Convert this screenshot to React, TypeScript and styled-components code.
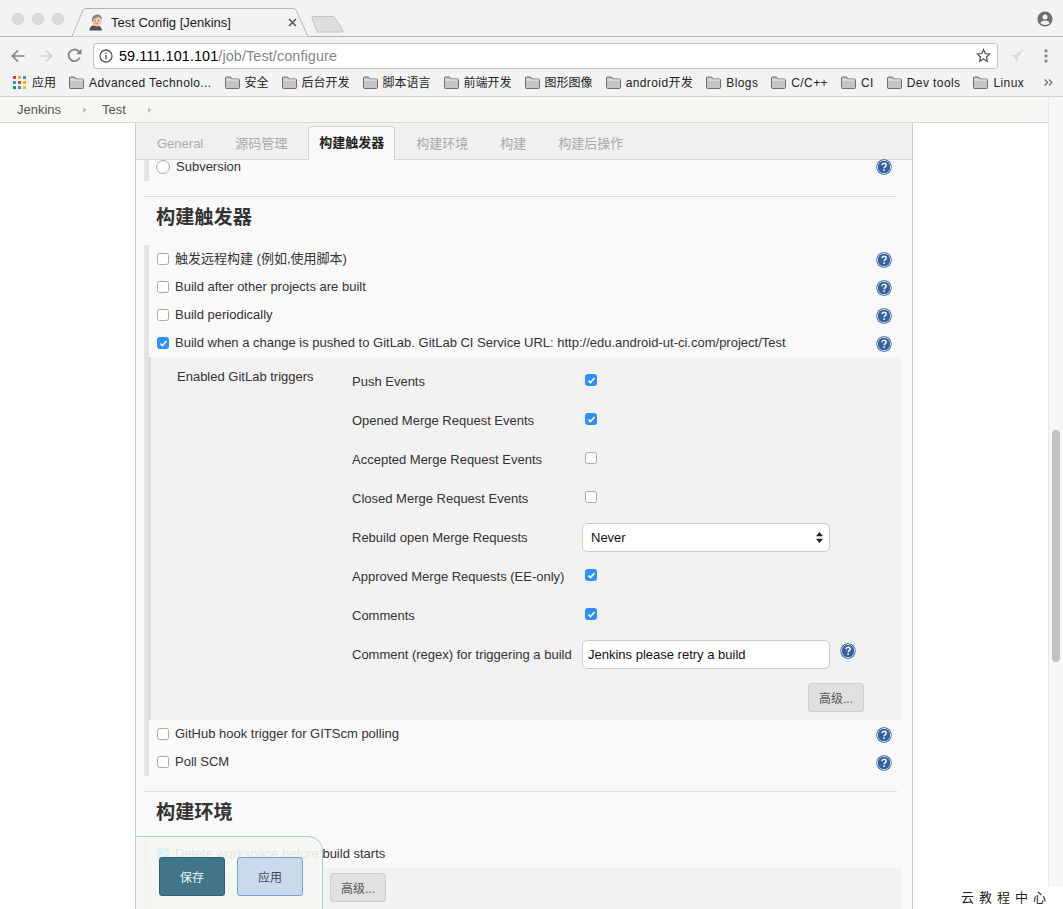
import { ReactNode } from "react";
import styled, { createGlobalStyle } from "styled-components";

const FONT = `"Liberation Sans", "Noto Sans CJK SC", sans-serif`;

const GlobalStyle = createGlobalStyle`
  html, body {
    margin: 0;
    height: 100%;
    overflow: hidden;
    background: #fff;
    font-family: ${FONT};
  }
  * { box-sizing: border-box; }
`;

const Screen = styled.div`
  position: relative;
  width: 1063px;
  height: 909px;
  overflow: hidden;
  display: flex;
  flex-direction: column;
`;

/* browser chrome */
const TitleBar = styled.div`
  height: 37px;
  flex: none;
  display: flex;
  background: #f3f3f3;
  border-bottom: 1px solid #b4b4b4;
  padding: 0 10px 0 12px;
`;

const Lights = styled.div`
  display: flex;
  gap: 8px;
  padding-top: 13px;
`;

const Light = styled.span`
  width: 12px;
  height: 12px;
  border-radius: 50%;
  background: #dcdcdc;
  border: 1px solid #d2d2d2;
`;

const Tab = styled.div`
  position: relative;
  width: 240px;
  height: 37px;
  margin-left: 7px;
  display: flex;
  align-items: center;
  padding: 8px 0 0 18px;
  font-size: 13px;
  color: #222;
`;

const TabShape = styled.svg`
  position: absolute;
  left: 0;
  top: 0;
`;

const TabTitle = styled.span`
  position: relative;
  margin-left: 6px;
  width: 177px;
`;

const TabClose = styled.svg`
  position: relative;
`;

const NewTab = styled.svg`
  margin: 16px 0 0 0;
`;

const TitleEnd = styled.div`
  margin-left: auto;
  padding-top: 11px;
`;

const ToolBar = styled.div`
  height: 33px;
  flex: none;
  display: flex;
  align-items: center;
  background: #f3f3f3;
  padding: 4px 0 0 11px;
`;

const NavIcons = styled.div`
  display: flex;
  align-items: center;
  gap: 14px;
  width: 82px;
`;

const Omnibox = styled.div`
  width: 905px;
  height: 26px;
  background: #fff;
  border: 1px solid #c2c2c2;
  border-radius: 3px;
  display: flex;
  align-items: center;
  padding: 0 6px 0 5px;
  font-size: 14.4px;
  color: #000;
  gap: 6px;
`;

const UrlMuted = styled.span`
  color: #80868b;
`;

const UrlText = styled.span`
  flex: 1;
  letter-spacing: 0.1px;
`;

const ToolEnd = styled.div`
  display: flex;
  align-items: center;
  margin-left: 11px;
  gap: 19px;
`;

const BookmarkBar = styled.div`
  height: 27px;
  flex: none;
  display: flex;
  align-items: center;
  background: #f3f3f3;
  border-bottom: 1px solid #d4d4d4;
  padding: 0 10px 1px 13px;
  font-size: 12px;
  color: #222;
  gap: 13px;
`;

const Bookmark = styled.span<{ $latin?: boolean }>`
  display: flex;
  align-items: center;
  gap: 5px;
  line-height: 14px;
  white-space: nowrap;
  letter-spacing: ${(p) => (p.$latin ? "0.4px" : "0")};
`;

const AppsBookmark = styled(Bookmark)`
  gap: 6px;
`;

const More = styled.svg`
  margin-left: auto;
`;

/* jenkins page */
const Breadcrumbs = styled.div`
  height: 26px;
  flex: none;
  display: flex;
  align-items: center;
  background: #f6f7f2;
  border-bottom: 1px solid #d8dcd0;
  padding: 0 15px 0 17px;
  font-size: 13px;
  color: #555;
`;

const Crumb = styled.span`
  margin-right: 22px;
`;

const CrumbArrow = styled.span`
  width: 0;
  height: 0;
  margin-right: 15px;
  border-left: 4px solid #c4c4c4;
  border-top: 3.5px solid transparent;
  border-bottom: 3.5px solid transparent;
`;

const Body = styled.div`
  flex: 1;
  min-height: 0;
  display: flex;
  padding-left: 135px;
`;

const Panel = styled.div`
  width: 778px;
  background: #f9f9f9;
  border-left: 1px solid #cfcfcf;
  border-right: 1px solid #cfcfcf;
`;

const TabBar = styled.div`
  height: 37px;
  display: flex;
  align-items: flex-end;
  gap: 10px;
  padding-left: 10px;
  background: #f0f0f0;
  border-bottom: 1px solid #d4d4d4;
`;

const PageTab = styled.div<{ $active?: boolean }>`
  height: ${(p) => (p.$active ? "34px" : "32px")};
  margin-bottom: -1px;
  padding: 0 ${(p) => (p.$active ? "10px" : "11px")};
  display: flex;
  align-items: center;
  padding-bottom: ${(p) => (p.$active ? "2px" : "1px")};
  font-size: 13px;
  line-height: 14px;
  font-weight: ${(p) => (p.$active ? 700 : 400)};
  color: ${(p) => (p.$active ? "#222" : "#aaa")};
  background: ${(p) => (p.$active ? "#f9f9f9" : "transparent")};
  border: ${(p) => (p.$active ? "1px solid #d4d4d4" : "none")};
  border-bottom: none;
  border-radius: 4px 4px 0 0;
`;

const Form = styled.div`
  padding: 0 15px 0 8px;
`;

const BarGroup = styled.div`
  border-left: 5px solid #e4e4e4;
`;

const Row = styled.div`
  height: 28px;
  display: flex;
  align-items: center;
  padding: 0 5px 0 8px;
  font-size: 13px;
  color: #333;
`;

const TopRow = styled(Row)`
  height: 21px;
  padding: 0 5px 7px 7px;
`;

const Divider = styled.hr`
  margin: 15px 0 0;
  border: none;
  border-top: 1px solid #dcdcdc;
`;

const Heading = styled.h2`
  margin: 0;
  height: 48px;
  padding: 9px 0 0 12px;
  font-size: 19.2px;
  line-height: 24px;
  font-weight: 700;
  color: #333;
`;

const Label = styled.span`
  flex: 1;
  margin-left: 6px;
  line-height: 14px;
`;

const Radio = styled.span`
  width: 14px;
  height: 14px;
  border-radius: 50%;
  background: #fff;
  border: 1px solid #aaa;
`;

const Box = styled.span<{ $checked?: boolean }>`
  width: 12px;
  height: 12px;
  flex: none;
  border-radius: 2.5px;
  display: flex;
  align-items: center;
  justify-content: center;
  background: ${(p) => (p.$checked ? "#2f8ffb" : "#fff")};
  border: 1px solid ${(p) => (p.$checked ? "#2f8ffb" : "#a9a9a9")};
`;

const RowHelp = styled.span`
  display: flex;
  margin-top: 2px;
`;

const Nested = styled.div`
  margin-left: -2px;
  margin-right: -5px;
  background: #f2f2f2;
  border-left: 4px solid #dcdcdc;
  display: flex;
  height: 363px;
  padding: 5px 38px 8px 26px;
`;

const NestedTitle = styled.div`
  width: 175px;
  font-size: 13px;
  color: #333;
  line-height: 30px;
`;

const Triggers = styled.div`
  flex: 1;
`;

const TriggerRow = styled.div`
  height: 39px;
  display: flex;
  align-items: center;
  font-size: 13px;
  color: #333;
`;

const TriggerLabel = styled.span`
  width: 230px;
  flex: none;
  white-space: nowrap;
`;

const TriggerCheck = styled.span`
  padding: 0 0 3px 3px;
`;

const SelectBox = styled.div`
  width: 248px;
  height: 29px;
  background: #fff;
  border: 1px solid #ccc;
  border-radius: 5px;
  display: flex;
  align-items: center;
  justify-content: space-between;
  padding: 0 6px 0 8px;
  font-size: 13px;
  color: #111;
`;

const TextBox = styled(SelectBox)`
  padding-left: 5px;
  justify-content: flex-start;
`;

const HelpSlot = styled.span`
  margin: -7px 0 0 10px;
  display: flex;
`;

const ButtonRow = styled.div`
  display: flex;
  justify-content: flex-end;
  padding-top: 9px;
`;

const GreyButton = styled.button`
  width: 56px;
  height: 29px;
  padding: 0;
  border: 1px solid #cdcdcd;
  border-radius: 3px;
  background: #e0e0e0;
  color: #555;
  font-family: ${FONT};
  font-size: 12px;
`;

const LowerPanel = styled.div`
  margin-left: -2px;
  margin-right: -5px;
  height: 41px;
  background: #f2f2f2;
  border-left: 4px solid #dcdcdc;
  padding: 5px 0 0 179px;
`;

const SaveBar = styled.div`
  position: absolute;
  left: 136px;
  bottom: 0;
  width: 187px;
  height: 73px;
  display: flex;
  gap: 12px;
  padding: 20px 0 0 23px;
  background: rgba(245, 248, 242, 0.9);
  border: 1px solid #a5d4bb;
  border-left: none;
  border-bottom: none;
  border-radius: 0 15px 0 0;
`;

const ActionButton = styled.button<{ $primary?: boolean }>`
  width: 66px;
  height: 39px;
  padding: 0;
  border-radius: 3px;
  font-family: ${FONT};
  font-size: 12px;
  color: ${(p) => (p.$primary ? "#f2f5f5" : "#3c4a55")};
  background: ${(p) => (p.$primary ? "#40768a" : "#c9daec")};
  border: 1px solid ${(p) => (p.$primary ? "#2f5f72" : "#6fa5d8")};
`;

const ScrollTrack = styled.div`
  position: absolute;
  right: 0;
  top: 97px;
  bottom: 0;
  width: 15px;
  background: #f7f7f7;
  border-left: 1px solid #e9e9e9;
`;

const ScrollThumb = styled.div`
  position: absolute;
  left: 3px;
  top: 333px;
  width: 8px;
  height: 232px;
  border-radius: 4px;
  background: #c2c2c2;
`;

const Watermark = styled.div`
  position: absolute;
  right: 0;
  bottom: 0;
  width: 118px;
  height: 22px;
  background: #fff;
  padding-left: 16px;
  font-size: 13px;
  line-height: 22px;
  letter-spacing: 5px;
  color: #222;
  white-space: nowrap;
`;

const AppsGrid = styled.span`
  display: grid;
  grid-template-columns: repeat(3, 3px);
  grid-auto-rows: 3px;
  gap: 2px;
`;

const AppsDot = styled.i<{ $color: string }>`
  background: ${(p) => p.$color};
`;

const FaviconSvg = styled.svg`
  position: relative;
`;

const Folder = () => (
  <svg width="15" height="13" viewBox="0 0 15 13">
    <path d="M.5 11.5V2a1 1 0 0 1 1-1h4l1.5 2h6.5a1 1 0 0 1 1 1v7.5a1 1 0 0 1-1 1h-12a1 1 0 0 1-1-1z" fill="#c4c4c4" stroke="#6e6e6e" />
    <path d="M1 4h13" stroke="#f2f2f2" />
  </svg>
);

const Help = () => (
  <svg width="16" height="16" viewBox="0 0 17 17">
    <circle cx="8.5" cy="8.5" r="8.2" fill="#2f5a9c" />
    <circle cx="8.5" cy="8.5" r="6.9" fill="none" stroke="#e8eef6" strokeWidth="1" />
    <circle cx="8.5" cy="8.5" r="6.3" fill="#34619f" />
    <path d="M6.3 6.6c.2-1.4 1.1-2 2.3-2 1.3 0 2.2.8 2.2 1.9 0 1-.6 1.4-1.3 1.9-.5.4-.7.7-.7 1.4" fill="none" stroke="#fff" strokeWidth="1.6" />
    <rect x="7.8" y="11" width="1.6" height="1.7" fill="#fff" />
  </svg>
);

const CheckBox = ({ checked }: { checked?: boolean }) => (
  <Box $checked={checked}>
    {checked && (
      <svg width="9" height="9" viewBox="0 0 9 9">
        <path d="M1.5 4.6l2 2 4-4.6" fill="none" stroke="#fff" strokeWidth="1.6" />
      </svg>
    )}
  </Box>
);

const OptionRow = ({ label, checked }: { label: string; checked?: boolean }) => (
  <Row>
    <CheckBox checked={checked} />
    <Label>{label}</Label>
    <RowHelp>
      <Help />
    </RowHelp>
  </Row>
);

const Trigger = ({ label, children }: { label: string; children: ReactNode }) => (
  <TriggerRow>
    <TriggerLabel>{label}</TriggerLabel>
    {children}
  </TriggerRow>
);

const JenkinsFavicon = () => (
  <FaviconSvg width="16" height="17" viewBox="0 0 16 17">
    <path d="M.5 16.500c0-3 1.500-4.500 3.500-5h5c2 .5 3.500 2 4 5z" fill="#45505e" />
    <path d="M5.500 12l1.800 1.300L9 12l.8 2.300-2.500.4-2.500-.4z" fill="#a8322c" />
    <ellipse cx="8" cy="7" rx="4.800" ry="5.400" fill="#efc9ab" />
    <path d="M3 7C2.500 3 5 .6 8.500.6c2.700 0 4.500 2 4.300 5-1.300-.8-2.300-2-2.800-3C8.500 4 5.500 4 4.500 5.500L4 8z" fill="#8d8781" />
    <path d="M6 9.800c1-.5 2.200-.5 3.200 0" fill="none" stroke="#a9705a" strokeWidth=".8" />
    <circle cx="6.300" cy="6.800" r=".6" fill="#4a3a30" />
    <circle cx="9.500" cy="6.800" r=".6" fill="#4a3a30" />
  </FaviconSvg>
);

const APP_COLORS = ["#e34133", "#f4b400", "#4285f4", "#4285f4", "#e34133", "#f4b400", "#0f9d58", "#4285f4", "#f4b400"];
const BOOKMARKS = ["Advanced Technolo...", "安全", "后台开发", "脚本语言", "前端开发", "图形图像", "android开发", "Blogs", "C/C++", "CI", "Dev tools", "Linux"];
const TABS = ["General", "源码管理", "构建触发器", "构建环境", "构建", "构建后操作"];

const App = () => (
  <Screen>
    <GlobalStyle />
    <TitleBar>
      <Lights>
        <Light />
        <Light />
        <Light />
      </Lights>
      <Tab>
        <TabShape width="240" height="37" viewBox="0 0 240 37">
          <path d="M0 36.500h1L12 10q.8-1.500 2.500-1.500h208q1.700 0 2.500 1.500l12 26.500h3" fill="#f3f3f3" stroke="#b4b4b4" />
        </TabShape>
        <JenkinsFavicon />
        <TabTitle>Test Config [Jenkins]</TabTitle>
        <TabClose width="9" height="9" viewBox="0 0 9 9">
          <path d="M1 1l7 7M8 1l-7 7" stroke="#555" strokeWidth="1.500" />
        </TabClose>
      </Tab>
      <NewTab width="33" height="17" viewBox="0 0 33 17">
        <path d="M1 2q-.4-1.500 1-1.500h20q1 0 1.500 1L32 14q.8 2-1 2H7q-1 0-1.500-1z" fill="#dedede" stroke="#c4c4c4" />
      </NewTab>
      <TitleEnd>
        <svg width="16" height="16" viewBox="0 0 16 16">
          <circle cx="8" cy="8" r="7.600" fill="#6f6f6f" />
          <circle cx="8" cy="6" r="2.500" fill="#f3f3f3" />
          <path d="M3.300 12c1-2 2.800-2.600 4.700-2.600s3.700.6 4.700 2.600c-1.200 1.300-2.900 2-4.700 2s-3.500-.7-4.700-2z" fill="#f3f3f3" />
        </svg>
      </TitleEnd>
    </TitleBar>
    <ToolBar>
      <NavIcons>
        <svg width="14" height="14" viewBox="0 0 15 14">
          <path d="M14.500 7H2M7.500 1L1.500 7l6 6" fill="none" stroke="#858585" strokeWidth="1.800" />
        </svg>
        <svg width="14" height="14" viewBox="0 0 15 14">
          <path d="M.5 7H13M7.500 1l6 6-6 6" fill="none" stroke="#d4d4d4" strokeWidth="1.800" />
        </svg>
        <svg width="15" height="15" viewBox="0 0 15 15">
          <path d="M12.800 9.500A5.800 5.800 0 1 1 11.500 3.200L13.500 5" fill="none" stroke="#858585" strokeWidth="1.800" />
          <path d="M14.500 .8v5.400H9z" fill="#858585" />
        </svg>
      </NavIcons>
      <Omnibox>
        <svg width="14" height="14" viewBox="0 0 14 14">
          <circle cx="7" cy="7" r="6" fill="none" stroke="#555" strokeWidth="1.300" />
          <rect x="6.300" y="6" width="1.400" height="4.500" fill="#555" />
          <rect x="6.300" y="3.500" width="1.400" height="1.500" fill="#555" />
        </svg>
        <UrlText>
          59.111.101.101<UrlMuted>/job/Test/configure</UrlMuted>
        </UrlText>
        <svg width="15" height="15" viewBox="0 0 24 24">
          <path d="M12 2.500l2.900 6.300 6.800.8-5 4.700 1.300 6.800-6-3.400-6 3.400 1.300-6.800-5-4.700 6.800-.8z" fill="none" stroke="#555" strokeWidth="2" />
        </svg>
      </Omnibox>
      <ToolEnd>
        <svg width="16" height="16" viewBox="0 0 16 16">
          <path d="M15 1.500c-2 .5-4 1.500-5.500 3L7.500 3l.5 3.500L1 7.500l4.500 1.500 2 5.500 1-1.500.5-4.500 2-1.500 1.500-3z" fill="#dadada" />
        </svg>
        <svg width="4" height="14" viewBox="0 0 4 14">
          <rect x=".5" y=".5" width="3" height="3" rx="1" fill="#8a8a8a" />
          <rect x=".5" y="5.500" width="3" height="3" rx="1" fill="#8a8a8a" />
          <rect x=".5" y="10.500" width="3" height="3" rx="1" fill="#8a8a8a" />
        </svg>
      </ToolEnd>
    </ToolBar>
    <BookmarkBar>
      <AppsBookmark>
        <AppsGrid>
          {APP_COLORS.map((color, i) => (
            <AppsDot key={i} $color={color} />
          ))}
        </AppsGrid>
        应用
      </AppsBookmark>
      {BOOKMARKS.map((name) => (
        <Bookmark key={name} $latin={/[a-z]/i.test(name)}>
          <Folder />
          {name}
        </Bookmark>
      ))}
      <More width="9" height="7" viewBox="0 0 9 7">
        <path d="M.7.5L3.500 3.500.7 6.500M5 .5l2.800 3L5 6.500" fill="none" stroke="#777" strokeWidth="1.400" />
      </More>
    </BookmarkBar>
    <Breadcrumbs>
      <Crumb>Jenkins</Crumb>
      <CrumbArrow />
      <Crumb>Test</Crumb>
      <CrumbArrow />
    </Breadcrumbs>
    <Body>
      <Panel>
        <TabBar>
          {TABS.map((name, i) => (
            <PageTab key={name} $active={i === 2}>
              {name}
            </PageTab>
          ))}
        </TabBar>
        <Form>
          <BarGroup>
            <TopRow>
              <Radio />
              <Label>Subversion</Label>
              <Help />
            </TopRow>
          </BarGroup>
          <Divider />
          <Heading>构建触发器</Heading>
          <BarGroup>
            <OptionRow label="触发远程构建 (例如,使用脚本)" />
            <OptionRow label="Build after other projects are built" />
            <OptionRow label="Build periodically" />
            <OptionRow label="Build when a change is pushed to GitLab. GitLab CI Service URL: http://edu.android-ut-ci.com/project/Test" checked />
            <Nested>
              <NestedTitle>Enabled GitLab triggers</NestedTitle>
              <Triggers>
                <Trigger label="Push Events">
                  <TriggerCheck>
                    <CheckBox checked />
                  </TriggerCheck>
                </Trigger>
                <Trigger label="Opened Merge Request Events">
                  <TriggerCheck>
                    <CheckBox checked />
                  </TriggerCheck>
                </Trigger>
                <Trigger label="Accepted Merge Request Events">
                  <TriggerCheck>
                    <CheckBox />
                  </TriggerCheck>
                </Trigger>
                <Trigger label="Closed Merge Request Events">
                  <TriggerCheck>
                    <CheckBox />
                  </TriggerCheck>
                </Trigger>
                <Trigger label="Rebuild open Merge Requests">
                  <SelectBox>
                    Never
                    <svg width="7" height="11" viewBox="0 0 7 11">
                      <path d="M3.500 0L7 4.300H0zM3.500 11L0 6.700h7z" fill="#222" />
                    </svg>
                  </SelectBox>
                </Trigger>
                <Trigger label="Approved Merge Requests (EE-only)">
                  <TriggerCheck>
                    <CheckBox checked />
                  </TriggerCheck>
                </Trigger>
                <Trigger label="Comments">
                  <TriggerCheck>
                    <CheckBox checked />
                  </TriggerCheck>
                </Trigger>
                <Trigger label="Comment (regex) for triggering a build">
                  <TextBox>Jenkins please retry a build</TextBox>
                  <HelpSlot>
                    <Help />
                  </HelpSlot>
                </Trigger>
                <ButtonRow>
                  <GreyButton>高级...</GreyButton>
                </ButtonRow>
              </Triggers>
            </Nested>
            <OptionRow label="GitHub hook trigger for GITScm polling" />
            <OptionRow label="Poll SCM" />
          </BarGroup>
          <Divider />
          <Heading>构建环境</Heading>
          <BarGroup>
            <Row>
              <CheckBox checked />
              <Label>Delete workspace before build starts</Label>
            </Row>
            <LowerPanel>
              <GreyButton>高级...</GreyButton>
            </LowerPanel>
          </BarGroup>
        </Form>
      </Panel>
    </Body>
    <SaveBar>
      <ActionButton $primary>保存</ActionButton>
      <ActionButton>应用</ActionButton>
    </SaveBar>
    <ScrollTrack>
      <ScrollThumb />
    </ScrollTrack>
    <Watermark>云教程中心</Watermark>
  </Screen>
);

export default App;
